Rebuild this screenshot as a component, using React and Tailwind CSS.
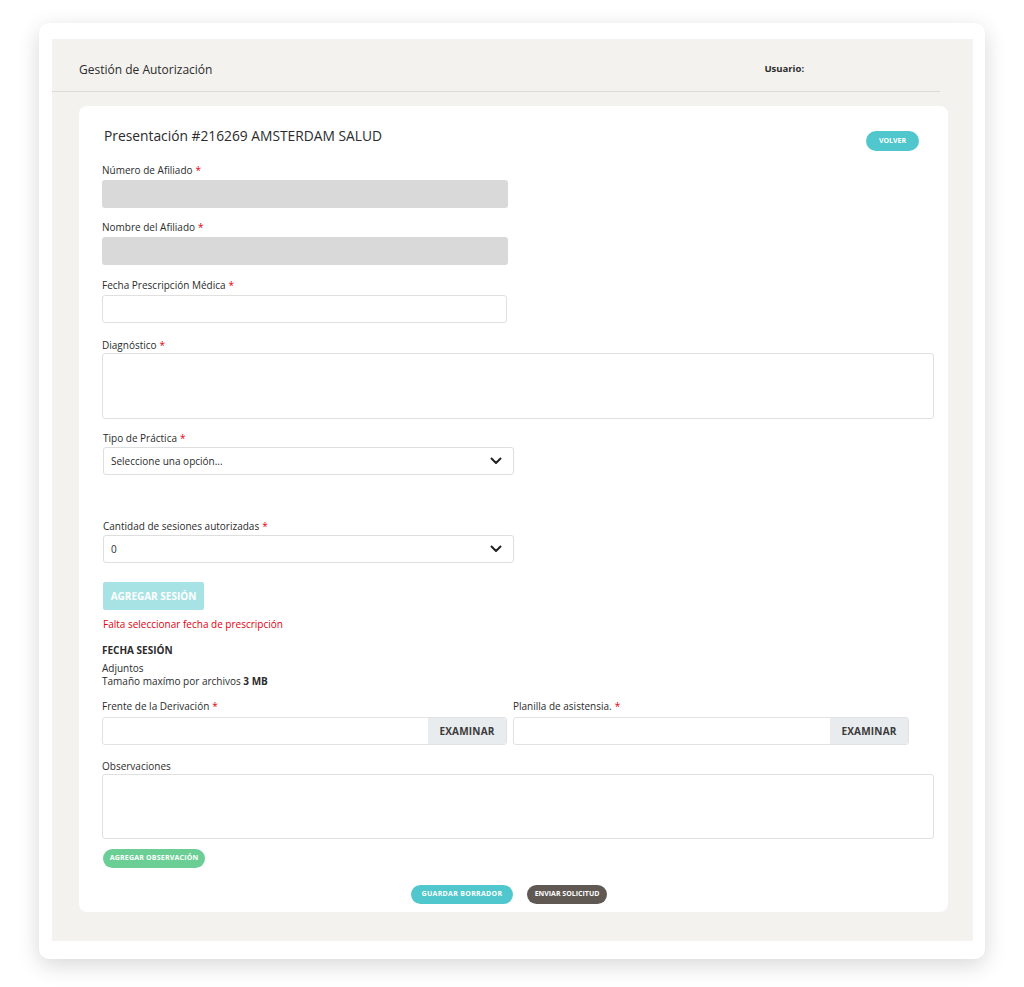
import React from 'react';

const font = { fontFamily: '"Open Sans", "Liberation Sans", sans-serif' };

const Label = ({ children, required, className = '' }) => (
  <div className={`text-[10px] leading-[12px] text-[#2b2b2b] ${className}`}>
    {children}
    {required && <span className="text-[#e3000f] ml-[3px]">*</span>}
  </div>
);

const Chevron = () => (
  <svg width="12" height="8" viewBox="0 0 12 8" className="mr-[11px]">
    <path d="M1.5 1.5 L6 6 L10.5 1.5" fill="none" stroke="#222" strokeWidth="2" strokeLinecap="round" strokeLinejoin="round" />
  </svg>
);

const SelectBox = ({ value }) => (
  <div className="ml-px w-[411px] h-[28px] border border-[#dedede] rounded-[3px] bg-white flex items-center justify-between pl-[7px] mt-[3px]">
    <span className="text-[10px] text-[#2b2b2b]">{value}</span>
    <Chevron />
  </div>
);

const FileInput = ({ width }) => (
  <div className={`flex h-[28px] border border-[#e2e2e2] rounded-[3px] bg-white overflow-hidden mt-[5px] ${width}`}>
    <div className="flex-1" />
    <div className="w-[78px] bg-[#e9ecef] flex items-center justify-center text-[10px] font-bold tracking-[0.2px] text-[#3a3a3a]">
      EXAMINAR
    </div>
  </div>
);

export default function App() {
  return (
    <div className="min-h-screen bg-white pt-[23px] pl-[39px]" style={font}>
      <div className="w-[946px] h-[936px] bg-white rounded-[10px] shadow-[0_6px_22px_rgba(0,0,0,0.16)] pt-[16px] pl-[13px]">
        <div className="w-[921px] h-[902px] bg-[#f3f2ef] pt-[1px]">
          {/* header */}
          <div className="mr-[33px] h-[52px] border-b border-[#dcdbd7] flex items-center pt-[8px] pl-[27px]">
            <span className="text-[12px] text-[#2b2b2b]">Gestión de Autorización</span>
            <span className="ml-[552px] text-[9.5px] font-bold text-[#2b2b2b]">Usuario:</span>
          </div>

          {/* form card */}
          <div className="ml-[27px] mt-[14px] w-[869px] h-[806px] bg-white rounded-[8px] pl-[23px] pt-[21px]">
            <div className="flex items-start pr-[29px]">
              <h1 className="ml-[2px] text-[13.8px] leading-[18px] text-[#2b2b2b]">
                Presentación #216269 AMSTERDAM SALUD
              </h1>
              <button className="ml-auto mt-[4px] w-[53px] h-[20px] rounded-full bg-[#4fc7cc] text-white text-[7px] font-bold">
                VOLVER
              </button>
            </div>

            <Label required className="mt-[13px]">Número de Afiliado</Label>
            <div className="mt-[4px] w-[406px] h-[28px] bg-[#d9d9d9] rounded-[3px]" />

            <Label required className="mt-[13px]">Nombre del Afiliado</Label>
            <div className="mt-[4px] w-[406px] h-[28px] bg-[#d9d9d9] rounded-[3px]" />

            <Label required className="mt-[14px]">Fecha Prescripción Médica</Label>
            <div className="mt-[4px] w-[405px] h-[28px] border border-[#e0e0e0] rounded-[3px]" />

            <Label required className="mt-[16px]">Diagnóstico</Label>
            <div className="mt-[2px] w-[832px] h-[66px] border border-[#e0e0e0] rounded-[3px]" />

            <Label required className="mt-[13px] ml-px">Tipo de Práctica</Label>
            <SelectBox value="Seleccione una opción..." />

            <Label required className="mt-[45px] ml-px">Cantidad de sesiones autorizadas</Label>
            <SelectBox value="0" />

            <button className="mt-[19px] ml-px w-[101px] h-[28px] bg-[#a7e3e5] rounded-[2px] text-white text-[10px] font-bold">
              AGREGAR SESIÓN
            </button>

            <div className="mt-[8px] ml-px text-[10px] leading-[12px] text-[#e3000f]">
              Falta seleccionar fecha de prescripción
            </div>

            <div className="mt-[14px] text-[10px] leading-[12px] font-bold text-[#2b2b2b]">FECHA SESIÓN</div>

            <div className="mt-[6px] text-[10px] leading-[13px] text-[#2b2b2b]">Adjuntos</div>
            <div className="text-[10px] leading-[13px] text-[#2b2b2b]">
              Tamaño maxímo por archivos <span className="font-bold">3 MB</span>
            </div>

            <div className="mt-[12px] flex gap-[6px]">
              <div>
                <Label required>Frente de la Derivación</Label>
                <FileInput width="w-[405px]" />
              </div>
              <div>
                <Label required>Planilla de asistensia.</Label>
                <FileInput width="w-[396px]" />
              </div>
            </div>

            <Label className="mt-[15px]">Observaciones</Label>
            <div className="mt-[2px] w-[832px] h-[65px] border border-[#e0e0e0] rounded-[3px]" />

            <button className="mt-[10px] ml-px w-[102px] h-[19px] rounded-full bg-[#6bcf95] text-white text-[7px] font-bold tracking-[0.2px]">
              AGREGAR OBSERVACIÓN
            </button>

            <div className="mt-[17px] flex pl-[309px] gap-[14px]">
              <button className="w-[102px] h-[19px] rounded-full bg-[#4fc7cc] text-white text-[7px] font-bold tracking-[0.3px]">
                GUARDAR BORRADOR
              </button>
              <button className="w-[80px] h-[19px] rounded-full bg-[#5f5853] text-white text-[7px] font-bold">
                ENVIAR SOLICITUD
              </button>
            </div>
          </div>
        </div>
      </div>
    </div>
  );
}
